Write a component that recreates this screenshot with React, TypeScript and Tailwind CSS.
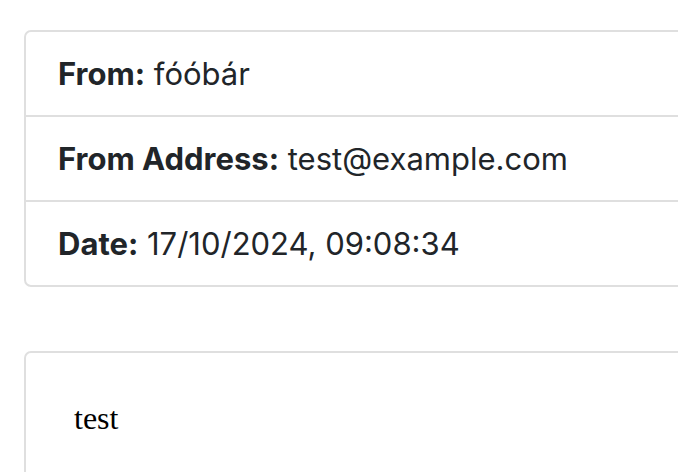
export default function App() {
  const rows = [
    { label: 'From:', value: 'fóóbár' },
    { label: 'From Address:', value: 'test@example.com' },
    { label: 'Date:', value: '17/10/2024, 09:08:34' },
  ]

  return (
    <div className="h-[472px] w-[678px] overflow-hidden bg-white pl-[24px] pt-[30px]">
      {/* Header info */}
      <div className="w-[800px] rounded-[7px] border-2 border-[#dfdfdf] font-[family-name:Inter,'Liberation_Sans',sans-serif] text-[31px] leading-[48px] text-[#212529]">
        {rows.map((r, i) => (
          <div
            key={r.label}
            className={i > 0 ? 'border-t-2 border-[#dfdfdf] px-[32px] py-[17.5px]' : 'px-[32px] py-[17.5px]'}
          >
            <b className="font-bold">{r.label}</b> {r.value}
          </div>
        ))}
      </div>

      {/* Body */}
      <div className="mt-[64px] h-[200px] w-[800px] rounded-[7px] border-2 border-[#dfdfdf] px-[48px] pt-[41px]">
        <div className="font-[family-name:'Liberation_Serif','Times_New_Roman',serif] text-[32px] leading-[48px] text-black">
          test
        </div>
      </div>
    </div>
  )
}
